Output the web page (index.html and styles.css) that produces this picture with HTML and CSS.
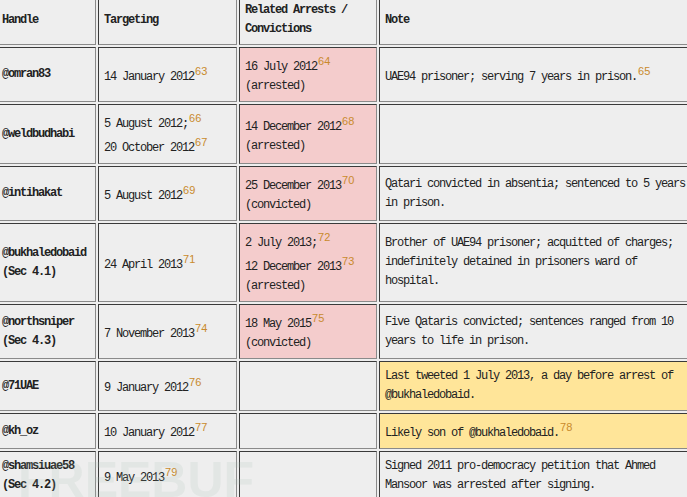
FILE: index.html
```html
<!DOCTYPE html>
<html>
<head>
<meta charset="utf-8">
<link rel="stylesheet" href="styles.css">
</head>
<body>
<table class="grid">
  <thead>
    <tr>
      <th class="c-handle">Handle</th>
      <th class="c-target">Targeting</th>
      <th class="c-arrest">Related Arrests / Convictions</th>
      <th class="c-note">Note</th>
    </tr>
  </thead>
  <tbody>
    <tr>
      <td class="handle">@omran83</td>
      <td>14 January 2012<sup>63</sup></td>
      <td class="pink">16 July 2012<sup>64</sup><br>(arrested)</td>
      <td>UAE94 prisoner; serving 7 years in prison.<sup>65</sup></td>
    </tr>
    <tr>
      <td class="handle">@weldbudhabi</td>
      <td>5 August 2012;<sup>66</sup><br>20 October 2012<sup>67</sup></td>
      <td class="pink">14 December 2012<sup>68</sup><br>(arrested)</td>
      <td></td>
    </tr>
    <tr>
      <td class="handle">@intihakat</td>
      <td>5 August 2012<sup>69</sup></td>
      <td class="pink">25 December 2013<sup>70</sup><br>(convicted)</td>
      <td>Qatari convicted in absentia; sentenced to 5 years in prison.</td>
    </tr>
    <tr>
      <td class="handle">@bukhaledobaid (Sec 4.1)</td>
      <td>24 April 2013<sup>71</sup></td>
      <td class="pink">2 July 2013;<sup>72</sup><br>12 December 2013<sup>73</sup><br>(arrested)</td>
      <td>Brother of UAE94 prisoner; acquitted of charges; indefinitely detained in prisoners ward of hospital.</td>
    </tr>
    <tr>
      <td class="handle">@northsniper (Sec 4.3)</td>
      <td>7 November 2013<sup>74</sup></td>
      <td class="pink">18 May 2015<sup>75</sup><br>(convicted)</td>
      <td>Five Qataris convicted; sentences ranged from 10 years to life in prison.</td>
    </tr>
    <tr>
      <td class="handle">@71UAE</td>
      <td>9 January 2012<sup>76</sup></td>
      <td></td>
      <td class="yellow">Last tweeted 1 July 2013, a day before arrest of @bukhaledobaid.</td>
    </tr>
    <tr>
      <td class="handle">@kh_oz</td>
      <td>10 January 2012<sup>77</sup></td>
      <td></td>
      <td class="yellow">Likely son of @bukhaledobaid.<sup>78</sup></td>
    </tr>
    <tr>
      <td class="handle">@shamsiuae58 (Sec 4.2)</td>
      <td>9 May 2013<sup>79</sup></td>
      <td></td>
      <td>Signed 2011 pro-democracy petition that Ahmed Mansoor was arrested after signing.</td>
    </tr>
  </tbody>
</table>
<div class="watermark">FREEBUF</div>
</body>
</html>
```
FILE: styles.css
```css
html, body {
  margin: 0;
  padding: 0;
  background: #eeeeee;
  overflow: hidden;
}
body {
  width: 687px;
  height: 497px;
  position: relative;
  font-family: "Liberation Mono", "DejaVu Sans Mono", monospace;
  font-size: 12px;
  letter-spacing: -1.2px;
  line-height: 19px;
  color: #222;
}
.grid {
  border-collapse: separate;
  border-spacing: 2px;
  table-layout: fixed;
  width: 705px;
  margin: -7px 0 0 -6px;
}
.grid th,
.grid td {
  box-sizing: border-box;
  padding: 5px;
  border: 1px solid;
  border-color: #3a3a3a #8a8a8a #8a8a8a #3a3a3a;
  text-align: left;
  vertical-align: middle;
  background: #eeeeee;
  font-weight: normal;
}
.grid th {
  font-weight: bold;
}
.c-handle { width: 100px; }
.c-target { width: 139px; }
.c-arrest { width: 138px; }
.c-note { width: 318px; }
.grid td.handle {
  font-weight: bold;
}
.grid td.pink {
  background: #f4cccc;
}
.grid td.yellow {
  background: #ffe599;
}
sup {
  font-family: "Liberation Sans", Arial, sans-serif;
  font-size: 11px;
  line-height: 16px;
  letter-spacing: 0;
  color: #c98a2c;
  vertical-align: 5px;
  margin-left: 1px;
}
.watermark {
  position: absolute;
  left: 18px;
  top: 450px;
  font-family: "Liberation Sans", Arial, sans-serif;
  font-weight: bold;
  font-size: 50px;
  letter-spacing: 0;
  line-height: 60px;
  color: rgba(170, 195, 180, 0.16);
  pointer-events: none;
}
```
